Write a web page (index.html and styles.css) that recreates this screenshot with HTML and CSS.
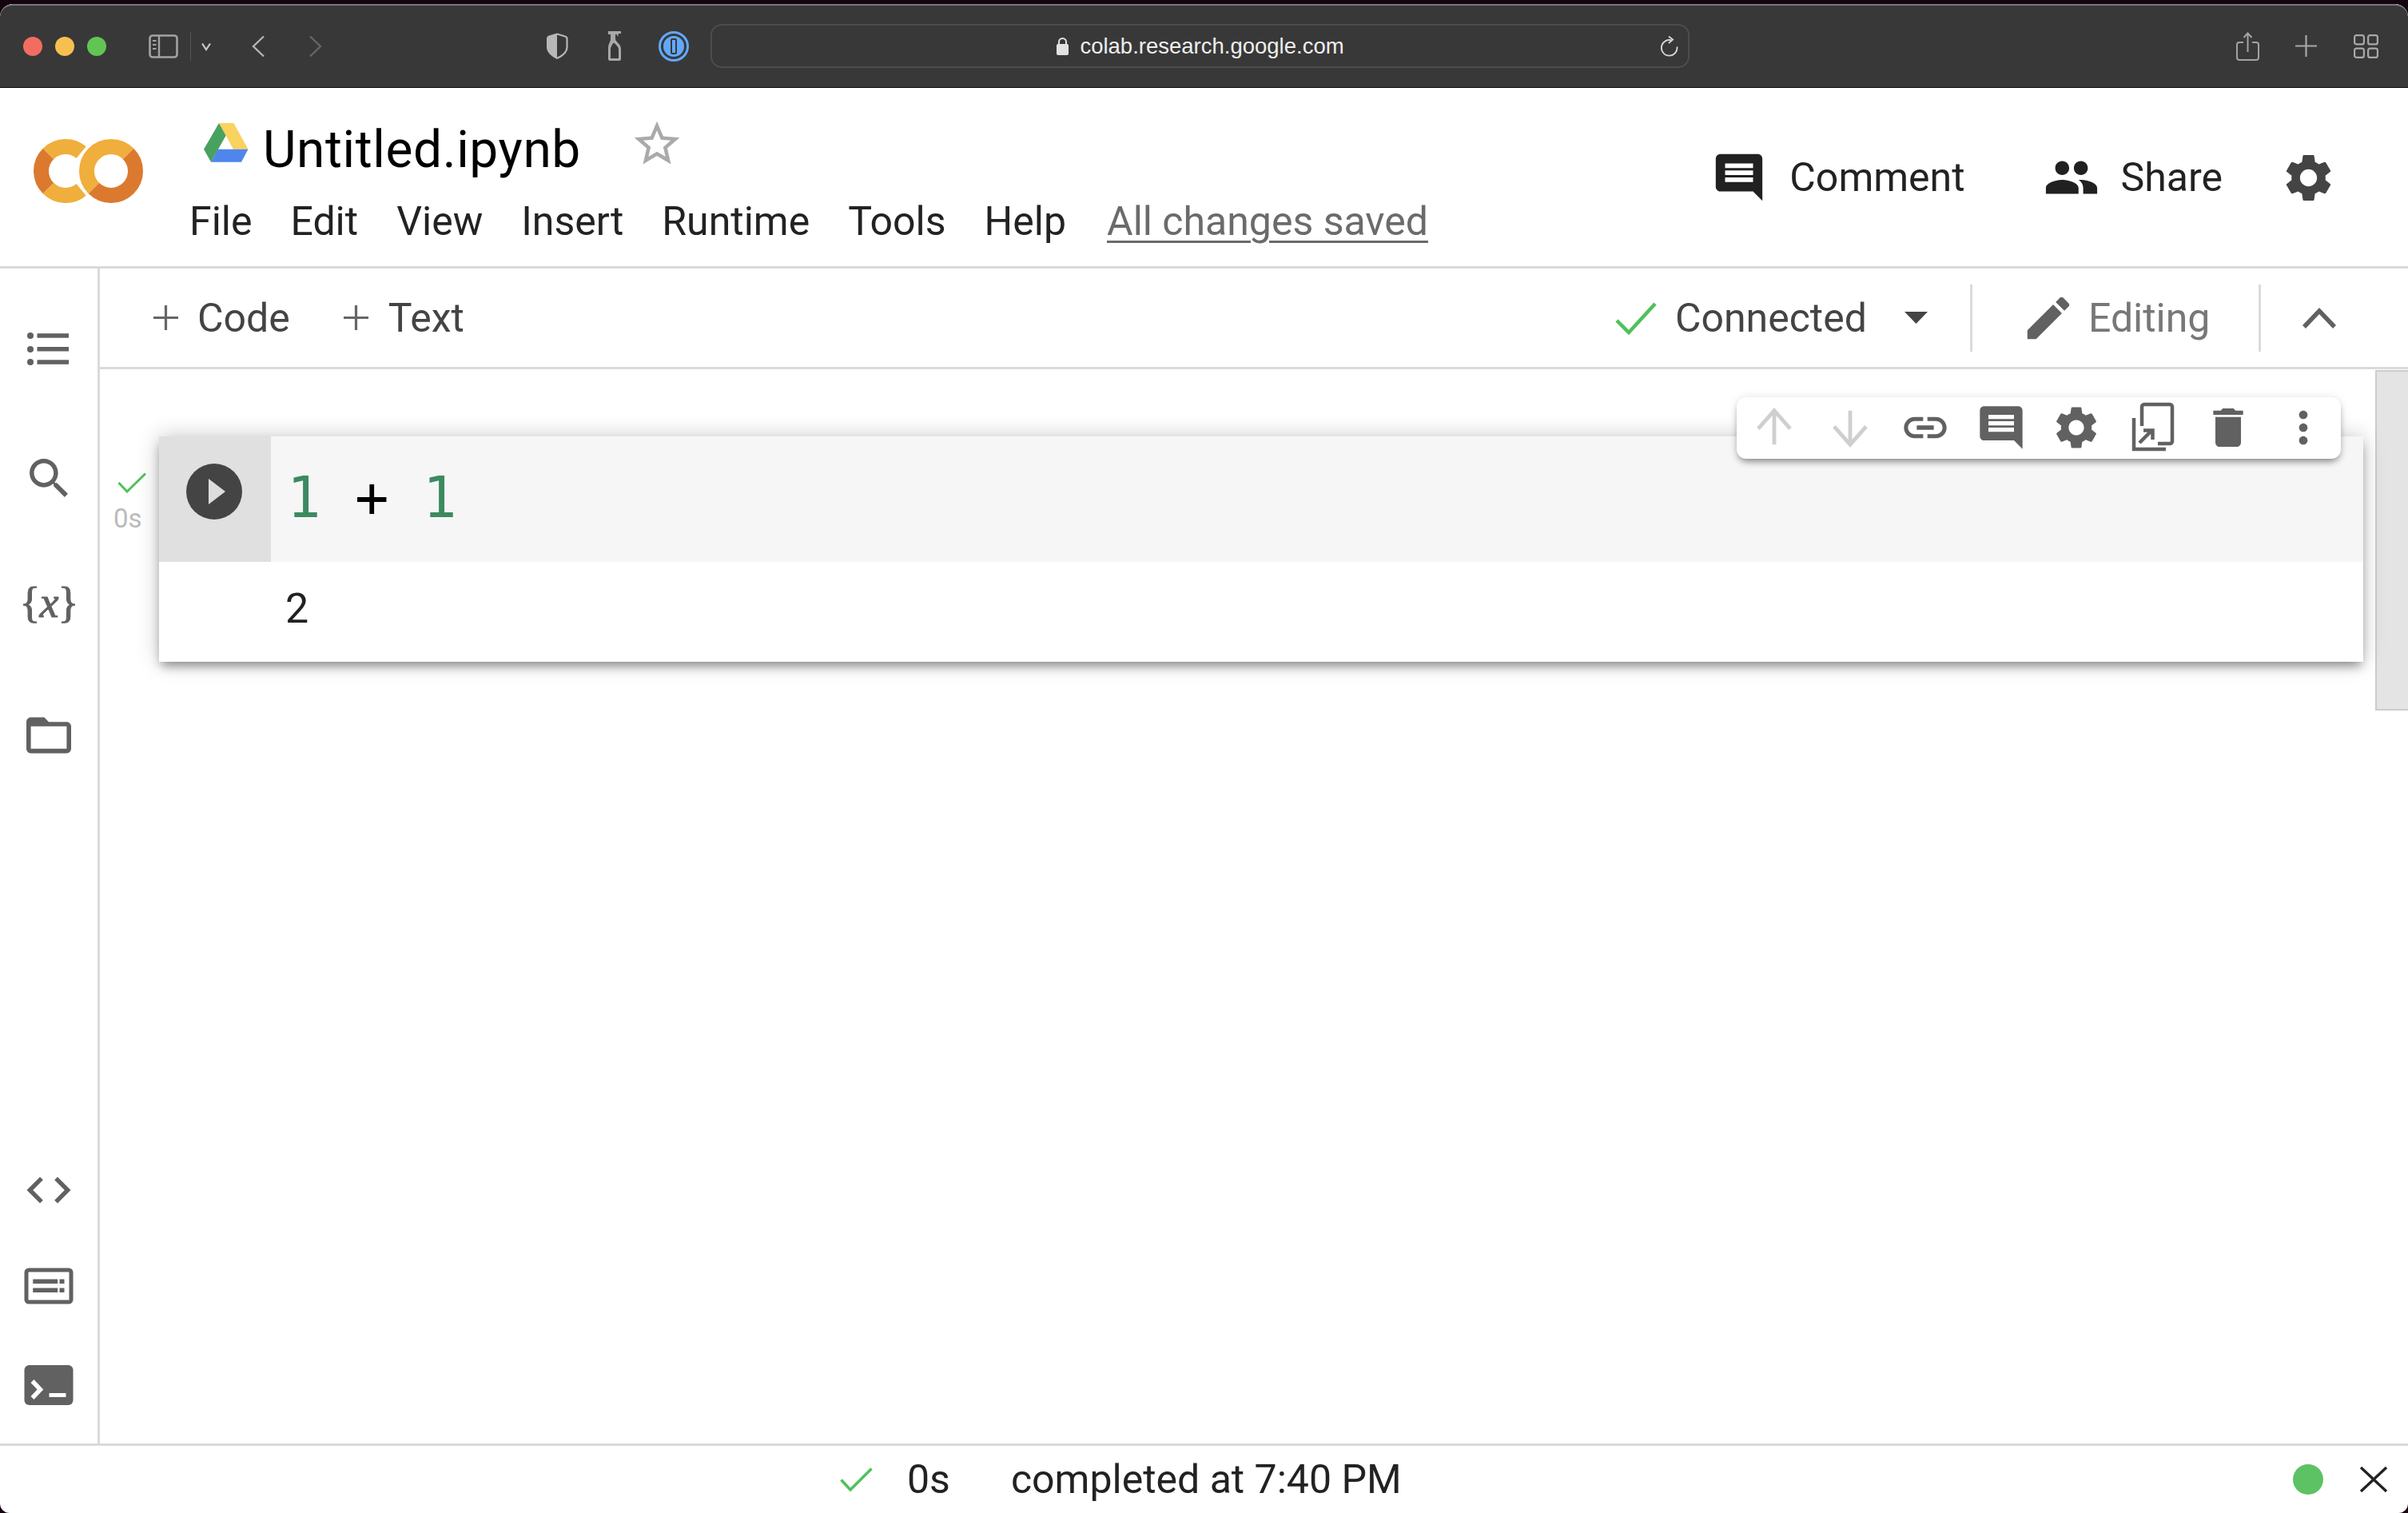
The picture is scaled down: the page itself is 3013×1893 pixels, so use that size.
FILE: index.html
```html
<!DOCTYPE html>
<html lang="en">
<head>
<meta charset="utf-8">
<title>Untitled.ipynb - Colaboratory</title>
<link rel="stylesheet" href="styles.css">
</head>
<body>
<div class="window">
  <div class="chrome">
    <span class="light light-red"></span><span class="light light-yellow"></span><span class="light light-green"></span>
    <svg class="ch-sidebar" viewBox="0 0 37 30"><rect x="1.5" y="1.5" width="34" height="27" rx="3.5" fill="none" stroke="#a3a3a3" stroke-width="2.6"/><path d="M13 2v26" stroke="#a3a3a3" stroke-width="2.4"/><path d="M5 8h4.5M5 13h4.5M5 18h4.5" stroke="#a3a3a3" stroke-width="2"/></svg>
    <span class="ch-divider"></span>
    <svg class="ch-caret" viewBox="0 0 14 14"><path d="M2 3.5L7 11l5-7.5" fill="none" stroke="#c9c9c9" stroke-width="2.2"/></svg>
    <svg class="ch-back" viewBox="0 0 17 28"><path d="M15 1.5L2 14l13 12.5" fill="none" stroke="#b4b4b4" stroke-width="2.4"/></svg>
    <svg class="ch-forward" viewBox="0 0 17 28"><path d="M2 1.5L15 14 2 26.5" fill="none" stroke="#666" stroke-width="2.4"/></svg>
    <svg class="ch-shield" viewBox="0 0 28 33"><path d="M14 1.500L24 4.500c1.500.5 2.500 1.500 2.500 3V18c0 6-5 10.500-12.500 14" fill="none" stroke="#b8b8b8" stroke-width="2.200"/><path d="M14 .5L4 3.500C2 4 1 5.500 1 7v11c0 6.500 5.500 11 13 15z" fill="#b8b8b8"/></svg>
    <svg class="ch-bottle" viewBox="0 0 16 38"><path d="M0 0h16v3h-3l-1 4-1.500-3H9v6c0 3 7 6 7 12v13c0 1-1 2-2 2H2c-1 0-2-1-2-2V21c0-5 3-8 3-11V4H0z" fill="#a8a8a8"/><path d="M6 15h2c1 2 5 4 5 8v11H3V23c0-4 2-5 3-8z" fill="#383838"/></svg>
    <svg class="ch-onepass" viewBox="0 0 38 38"><circle cx="19" cy="19" r="17.500" fill="none" stroke="#62a8ff" stroke-width="3"/><circle cx="19" cy="19" r="13" fill="#62a8ff"/><rect x="15" y="9" width="8" height="20" rx="2" fill="#383838"/><rect x="17" y="11" width="4" height="16" fill="#62a8ff"/></svg>
    <div class="url-bar">
      <span></span>
      <span class="url-center">
        <svg class="url-lock" viewBox="0 0 17 23"><path d="M4 10V6.500a4.500 4.500 0 0 1 9 0V10" fill="none" stroke="#e2e2e2" stroke-width="2"/><rect x="1" y="9" width="15" height="14" rx="2" fill="#e2e2e2"/></svg>
        <span class="url-text">colab.research.google.com</span>
      </span>
      <svg class="url-reload" viewBox="0 0 22 26"><path d="M14 5.600A9.800 9.800 0 1 0 20.400 13.500" fill="none" stroke="#d5d5d5" stroke-width="1.900"/><path d="M10 .5L15 4.600 10 9" fill="none" stroke="#d5d5d5" stroke-width="1.900"/></svg>
    </div>
    <svg class="ch-share" viewBox="0 0 29 36"><path d="M9 13H4a3 3 0 0 0-3 3v16a3 3 0 0 0 3 3h21a3 3 0 0 0 3-3V16a3 3 0 0 0-3-3h-5M14.500 25V2M9.500 7l5-5.500 5 5.500" fill="none" stroke="#a3a3a3" stroke-width="2"/></svg>
    <svg class="ch-plus" viewBox="0 0 27 27"><path d="M13.500 0v27M0 13.500h27" stroke="#a8a8a8" stroke-width="2.200"/></svg>
    <svg class="ch-grid" viewBox="0 0 31 30"><g fill="none" stroke="#a8a8a8" stroke-width="2.200"><rect x="1.100" y="1.100" width="11.800" height="11.300" rx="2.500"/><rect x="18.100" y="1.100" width="11.800" height="11.300" rx="2.500"/><rect x="1.100" y="17.600" width="11.800" height="11.300" rx="2.500"/><rect x="18.100" y="17.600" width="11.800" height="11.300" rx="2.500"/></g></svg>
  </div>

  <header class="header">
    <svg class="logo" viewBox="0 0 138 81">
      <g fill="none" stroke-width="19">
        <path d="M18.430 19.430A30.500 30.500 0 0 1 59.600 17.600" stroke="#f0ae3c"/>
        <path d="M18.430 62.570A30.500 30.500 0 0 0 59.600 64.400" stroke="#f0ae3c"/>
        <path d="M18.430 19.430A30.500 30.500 0 0 0 18.430 62.570" stroke="#db7a2f"/>
        <path d="M118.570 19.430A30.500 30.500 0 0 0 75.430 62.570" stroke="#f0ae3c"/>
        <path d="M118.570 19.430A30.500 30.500 0 0 1 75.430 62.570" stroke="#db7a2f"/>
      </g>
    </svg>
    <div class="title-col">
      <div class="title-row">
        <svg class="drive" viewBox="0 0 56 49"><polygon points="19,0 28,15 9,48.700 0,32.700" fill="#49a160"/><polygon points="19,0 37.500,0 55.500,32.700 37,32.700" fill="#f9d25f"/><polygon points="17.700,32.700 55.500,32.700 47,48.700 9,48.700" fill="#4f86ec"/></svg>
        <span class="title">Untitled.ipynb</span>
        <svg class="star" viewBox="0 0 24 24"><path d="M22 9.240l-7.190-.62L12 2 9.190 8.630 2 9.240l5.460 4.730L5.820 21 12 17.270 18.180 21l-1.630-7.030L22 9.240zM12 15.400l-3.760 2.270 1-4.280-3.320-2.880 4.380-.38L12 6.100l1.710 4.040 4.380.38-3.320 2.880 1 4.280L12 15.400z"/></svg>
      </div>
      <nav class="menu">
        <span>File</span><span>Edit</span><span>View</span><span>Insert</span><span>Runtime</span><span>Tools</span><span>Help</span><span class="saved">All changes saved</span>
      </nav>
    </div>
    <div class="actions">
      <svg class="act-icon" viewBox="0 0 24 24"><path d="M21.990 4c0-1.100-.89-2-1.990-2H4c-1.100 0-2 .9-2 2v12c0 1.100.9 2 2 2h14l4 4-.01-18zM18 14H6v-2h12v2zm0-3H6V9h12v2zm0-3H6V6h12v2z"/></svg>
      <span class="act-label act-comment">Comment</span>
      <svg class="act-icon" viewBox="0 0 24 24"><path d="M16 11c1.660 0 2.990-1.340 2.990-3S17.660 5 16 5c-1.660 0-3 1.340-3 3s1.340 3 3 3zm-8 0c1.660 0 2.990-1.340 2.990-3S9.660 5 8 5C6.340 5 5 6.340 5 8s1.340 3 3 3zm0 2c-2.330 0-7 1.170-7 3.500V19h14v-2.500c0-2.330-4.670-3.500-7-3.500zm8 0c-.29 0-.62.02-.97.05 1.160.84 1.970 1.970 1.970 3.450V19h6v-2.500c0-2.330-4.670-3.500-7-3.500z"/></svg>
      <span class="act-label act-share">Share</span>
      <svg class="act-gear" viewBox="0 0 24 24"><path d="M19.140 12.940c.04-.3.06-.61.06-.94 0-.32-.02-.64-.07-.94l2.030-1.580c.18-.14.23-.41.12-.61l-1.920-3.320c-.12-.22-.37-.29-.59-.22l-2.390.96c-.5-.38-1.030-.7-1.620-.94l-.36-2.540c-.04-.24-.24-.41-.48-.41h-3.840c-.24 0-.43.17-.47.41l-.36 2.540c-.59.24-1.130.57-1.620.94l-2.390-.96c-.22-.08-.47 0-.59.22L2.740 8.870c-.12.21-.08.47.12.61l2.030 1.580c-.05.3-.09.63-.09.94s.02.64.07.94l-2.030 1.580c-.18.14-.23.41-.12.61l1.920 3.320c.12.22.37.29.59.22l2.390-.96c.5.38 1.030.7 1.620.94l.36 2.540c.05.24.24.41.48.41h3.840c.24 0 .44-.17.47-.41l.36-2.540c.59-.24 1.130-.56 1.620-.94l2.390.96c.22.08.47 0 .59-.22l1.920-3.320c.12-.22.07-.47-.12-.61l-2.010-1.580zM12 15.600c-1.980 0-3.600-1.620-3.600-3.600s1.620-3.600 3.600-3.600 3.600 1.620 3.600 3.600-1.620 3.600-3.600 3.600z"/></svg>
    </div>
  </header>

  <div class="main">
    <aside class="sidebar">
      <div class="sb-top">
        <svg class="sb-icon" viewBox="0 0 64 64"><circle cx="9" cy="15" r="4"/><circle cx="9" cy="32" r="4"/><circle cx="9" cy="48" r="4"/><rect x="17.500" y="12.200" width="39.500" height="5.500"/><rect x="17.500" y="29" width="39.500" height="5.500"/><rect x="17.500" y="45.300" width="39.500" height="5.500"/></svg>
        <svg class="sb-icon" viewBox="0.070 0.070 23.360 23.360"><path d="M15.500 14h-.79l-.28-.27C15.410 12.590 16 11.110 16 9.500 16 5.910 13.090 3 9.500 3S3 5.910 3 9.500 5.910 16 9.500 16c1.610 0 3.090-.59 4.230-1.570l.27.28v.79l5 4.990L20.490 19l-4.990-5zm-6 0C7.010 14 5 11.990 5 9.500S7.010 5 9.500 5 14 7.010 14 9.500 11.990 14 9.500 14z"/></svg>
        <div class="sb-vars">{<i>x</i>}</div>
        <svg class="sb-icon" viewBox="0.570 0.570 22.860 22.860"><path d="M20 6h-8l-2-2H4c-1.100 0-1.990.9-1.990 2L2 18c0 1.100.9 2 2 2h16c1.100 0 2-.9 2-2V8c0-1.100-.9-2-2-2zm0 12H4V8h16v10z"/></svg>
      </div>
      <div class="sb-bottom">
        <svg class="sb-icon" viewBox="0.360 0.360 23.270 23.270"><path d="M9.400 16.600L4.800 12l4.600-4.600L8 6l-6 6 6 6 1.400-1.400zm5.200 0l4.600-4.600-4.600-4.600L16 6l6 6-6 6-1.400-1.400z"/></svg>
        <svg class="sb-icon" viewBox="-1.500 -9.500 64 64"><rect x="2.500" y="2.500" width="56" height="40" rx="3" fill="none" stroke="#616161" stroke-width="5"/><rect x="10.700" y="14" width="31" height="5.500"/><rect x="10.700" y="25" width="31" height="5.500"/><rect x="44" y="14" width="6" height="5.500"/><rect x="44" y="25" width="6" height="5.500"/></svg>
        <svg class="sb-icon sb-term" viewBox="-1.500 -7 64 64"><rect width="61" height="50" rx="6"/><path d="M10 20l10 10.500L10 41" fill="none" stroke="#fff" stroke-width="5.500"/><rect x="31" y="35" width="21" height="5" fill="#fff"/></svg>
      </div>
    </aside>

    <div class="content">
      <div class="toolbar">
        <svg class="tb-plus" viewBox="0 0 31 31"><path d="M15.500 0v31M0 15.500h31" stroke="#666" stroke-width="3.200"/></svg>
        <span class="tb-label tb-code">Code</span>
        <svg class="tb-plus" viewBox="0 0 31 31"><path d="M15.500 0v31M0 15.500h31" stroke="#666" stroke-width="3.200"/></svg>
        <span class="tb-label tb-text">Text</span>
        <svg class="tb-check" viewBox="0 0 52 42"><path d="M2 24l15 15L50 3" fill="none" stroke="#4fc15b" stroke-width="4.500"/></svg>
        <span class="tb-label tb-connected">Connected</span>
        <svg class="tb-caret" viewBox="0 0 29 15"><polygon points="0,0 29,0 14.500,15" fill="#444"/></svg>
        <span class="tb-divider tb-div1"></span>
        <svg class="tb-pencil" viewBox="0 0 24 24"><path d="M3 17.250V21h3.750L17.810 9.940l-3.750-3.750L3 17.250zM20.710 7.040c.39-.39.39-1.020 0-1.410l-2.340-2.340c-.39-.39-1.020-.39-1.410 0l-1.830 1.830 3.750 3.750 1.830-1.830z"/></svg>
        <span class="tb-label tb-editing">Editing</span>
        <span class="tb-divider tb-div2"></span>
        <svg class="tb-chevron" viewBox="0 0 42 26"><path d="M0 22L21 0l21 22-4 4L21 8 4 26z" fill="#616161"/></svg>
      </div>

      <div class="notebook">
        <div class="exec">
          <svg class="exec-check" viewBox="0 0 36 26"><path d="M1.500 13L12 24 35 1.500" fill="none" stroke="#4fc15b" stroke-width="3"/></svg>
          <span class="exec-time">0s</span>
        </div>
        <div class="cell">
          <div class="cell-toolbar">
            <svg class="ct-icon ct-off" viewBox="0 0 24 24"><path d="M12 4v16M4.500 12.500L12 4l7.500 8.500" fill="none" stroke="#cfcfcf" stroke-width="1.800"/></svg>
            <svg class="ct-icon ct-off" viewBox="0 0 24 24"><path d="M12 20V4M4.500 11.500L12 20l7.500-8.500" fill="none" stroke="#cfcfcf" stroke-width="1.800"/></svg>
            <svg class="ct-icon" viewBox="0 0 24 24"><path d="M3.900 12c0-1.710 1.390-3.100 3.100-3.100h4V7H7c-2.760 0-5 2.240-5 5s2.240 5 5 5h4v-1.900H7c-1.710 0-3.100-1.390-3.100-3.100zM8 13h8v-2H8v2zm9-6h-4v1.900h4c1.710 0 3.100 1.390 3.100 3.100s-1.390 3.100-3.100 3.100h-4V17h4c2.760 0 5-2.240 5-5s-2.240-5-5-5z"/></svg>
            <svg class="ct-icon" viewBox="0 0 24 24"><path d="M21.990 4c0-1.100-.89-2-1.990-2H4c-1.100 0-2 .9-2 2v12c0 1.100.9 2 2 2h14l4 4-.01-18zM18 14H6v-2h12v2zm0-3H6V9h12v2zm0-3H6V6h12v2z"/></svg>
            <svg class="ct-icon" viewBox="0 0 24 24"><path d="M19.140 12.940c.04-.3.06-.61.06-.94 0-.32-.02-.64-.07-.94l2.030-1.580c.18-.14.23-.41.12-.61l-1.920-3.320c-.12-.22-.37-.29-.59-.22l-2.390.96c-.5-.38-1.030-.7-1.620-.94l-.36-2.540c-.04-.24-.24-.41-.48-.41h-3.840c-.24 0-.43.17-.47.41l-.36 2.540c-.59.24-1.130.57-1.620.94l-2.390-.96c-.22-.08-.47 0-.59.22L2.740 8.870c-.12.21-.08.47.12.61l2.030 1.580c-.05.3-.09.63-.09.94s.02.64.07.94l-2.030 1.580c-.18.14-.23.41-.12.61l1.920 3.320c.12.22.37.29.59.22l2.390-.96c.5.38 1.030.7 1.620.94l.36 2.540c.05.24.24.41.48.41h3.840c.24 0 .44-.17.47-.41l.36-2.540c.59-.24 1.130-.56 1.620-.94l2.390.96c.22.08.47 0 .59-.22l1.920-3.320c.12-.22.07-.47-.12-.61l-2.010-1.580zM12 15.600c-1.980 0-3.600-1.620-3.600-3.600s1.620-3.600 3.600-3.600 3.600 1.620 3.600 3.600-1.620 3.600-3.600 3.600z"/></svg>
            <svg class="ct-icon" viewBox="0 0 64 64"><g fill="none" stroke="#616161" stroke-width="4.500"><path d="M19 30V6a3 3 0 0 1 3-3h32a3 3 0 0 1 3 3v43a3 3 0 0 1-3 3H39"/><path d="M9 20v39h40"/><path d="M16 51l15-15M21 35.500h11.500V47"/></g></svg>
            <svg class="ct-icon" viewBox="0 0 24 24"><path d="M6 19c0 1.100.9 2 2 2h8c1.100 0 2-.9 2-2V7H6v12zM19 4h-3.500l-1-1h-5l-1 1H5v2h14V4z"/></svg>
            <svg class="ct-icon" viewBox="0 0 24 24"><path d="M12 8c1.100 0 2-.9 2-2s-.9-2-2-2-2 .9-2 2 .9 2 2 2zm0 2c-1.100 0-2 .9-2 2s.9 2 2 2 2-.9 2-2-.9-2-2-2zm0 6c-1.100 0-2 .9-2 2s.9 2 2 2 2-.9 2-2-.9-2-2-2z"/></svg>
          </div>
          <div class="cell-input">
            <div class="gutter">
              <div class="run-btn"><svg class="run-tri" viewBox="0 0 21 32"><polygon points="0,0 21,16 0,32" fill="#ddd"/></svg></div>
            </div>
            <div class="code"><span class="num">1</span> + <span class="num">1</span></div>
          </div>
          <div class="cell-output">2</div>
        </div>
        <div class="scrollbar"></div>
      </div>
    </div>
  </div>

  <footer class="status">
    <svg class="st-check" viewBox="0 0 41 30"><path d="M1.500 15.500L13 28 39.500 1.500" fill="none" stroke="#4fc15b" stroke-width="3.500"/></svg>
    <span class="st-time">0s</span>
    <span class="st-text">completed at 7:40 PM</span>
    <span class="st-dot"></span>
    <svg class="st-close" viewBox="0 0 36 32"><path d="M2 1l32 30M34 1L2 31" stroke="#222" stroke-width="3.400"/></svg>
  </footer>
</div>
</body>
</html>
```

FILE: styles.css
```css
* { box-sizing: border-box; }
html, body { margin: 0; height: 100%; }
body {
  background: #14040f;
  padding-top: 5px;
  overflow: hidden;
  font-family: Roboto, "Liberation Sans", sans-serif;
  color: #222;
}
svg { display: block; flex: none; }

.window {
  width: 3013px;
  height: 1888px;
  display: flex;
  flex-direction: column;
  background: #fff;
  border-radius: 16px 16px 12px 12px;
  overflow: hidden;
}

/* browser chrome */
.chrome {
  height: 105px;
  flex: none;
  display: flex;
  align-items: center;
  padding-left: 29px;
  padding-bottom: 1px;
  background: #383838;
  border-top: 2px solid #777;
  border-bottom: 1px solid #0a0a0a;
  border-radius: 16px 16px 0 0;
}
.light { width: 24px; height: 24px; border-radius: 50%; margin-right: 16px; flex: none; }
.light-red { background: #f26d60; }
.light-yellow { background: #f6bf4f; }
.light-green { background: #61c554; margin-right: 0; }
.ch-sidebar { width: 37px; height: 30px; margin-left: 53px; }
.ch-divider { width: 1px; height: 36px; background: #555; margin-left: 15px; }
.ch-caret { width: 14px; height: 14px; margin-left: 12px; }
.ch-back { width: 17px; height: 28px; margin-left: 50px; }
.ch-forward { width: 17px; height: 28px; margin-left: 54px; }
.ch-shield { width: 28px; height: 33px; margin-left: 280px; }
.ch-bottle { width: 16px; height: 38px; margin-left: 50px; }
.ch-onepass { width: 38px; height: 38px; margin-left: 47px; }
.url-bar {
  width: 1225px;
  height: 55px;
  margin-left: 27px;
  border: 2px solid #4d4d4d;
  border-radius: 14px;
  display: grid;
  grid-template-columns: 1fr auto 1fr;
  align-items: center;
}
.url-center { display: flex; align-items: center; gap: 13px; }
.url-lock { width: 17px; height: 23px; }
.url-text { font: 500 27.5px/34px "Liberation Sans", sans-serif; color: #eee; margin-top: 1px; }
.url-reload { width: 22px; height: 26px; justify-self: end; margin-right: 12px; }
.ch-share { width: 29px; height: 36px; margin-left: 684px; }
.ch-plus { width: 27px; height: 27px; margin-left: 45px; }
.ch-grid { width: 31px; height: 30px; margin-left: 46px; }

/* notebook header */
.header {
  height: 226px;
  flex: none;
  display: flex;
  border-bottom: 3px solid #dadada;
  padding-left: 42px;
}
.logo { width: 138px; height: 81px; margin-top: 63px; }
.title-col { margin-left: 57px; display: flex; flex-direction: column; }
.title-row { display: flex; padding-left: 18px; height: 118px; }
.drive { width: 56px; height: 49px; margin-top: 44px; }
.title { font-size: 64px; line-height: 76px; margin-left: 18px; margin-top: 40px; color: #000; letter-spacing: .6px; }
.star { width: 68px; height: 68px; margin-left: 61px; margin-top: 36px; fill: #aaa; }
.menu { display: flex; gap: 48px; font-size: 50px; line-height: 60px; margin-top: 19px; color: #222; }
.saved { color: #6b6b6b; text-decoration: underline; text-decoration-thickness: 3px; text-underline-offset: 7px; margin-left: 3px; }
.actions { margin-left: auto; display: flex; align-items: center; padding-right: 89px; height: 224px; }
.act-icon { width: 70px; height: 70px; fill: #212121; }
.act-label { font-size: 50px; color: #222; }
.act-comment { margin-left: 28px; margin-right: 98px; }
.act-share { margin-left: 27px; }
.act-gear { width: 71px; height: 71px; margin-left: 72px; fill: #444; }

/* main area */
.main { flex: 1; display: flex; min-height: 0; }
.sidebar {
  width: 125px;
  flex: none;
  border-right: 3px solid #dadada;
  display: flex;
  flex-direction: column;
  justify-content: space-between;
  align-items: center;
  padding: 69px 0 41px;
}
.sb-top { display: flex; flex-direction: column; gap: 97px; align-items: center; }
.sb-bottom { display: flex; flex-direction: column; gap: 56px; align-items: center; }
.sb-icon { width: 64px; height: 64px; fill: #616161; }
.sb-term { margin-top: 4px; }
.sb-vars {
  height: 64px;
  width: 64px;
  margin-left: -9px;
  text-align: center;
  font: 54px/54px "Liberation Serif", serif;
  letter-spacing: -1px;
  color: #616161;
  -webkit-text-stroke: 1px #616161;
  white-space: nowrap;
}

.content { flex: 1; display: flex; flex-direction: column; min-width: 0; }
.toolbar {
  height: 126px;
  flex: none;
  display: flex;
  align-items: center;
  padding-left: 67px;
  border-bottom: 3px solid #dadada;
}
.tb-plus { width: 31px; height: 31px; }
.tb-label { font-size: 50px; color: #444; }
.tb-code { margin-left: 24px; margin-right: 67px; }
.tb-text { margin-left: 25px; }
.tb-check { width: 52px; height: 42px; margin-left: 1440px; }
.tb-connected { margin-left: 23px; }
.tb-caret { width: 29px; height: 15px; margin-left: 47px; }
.tb-divider { width: 3px; height: 84px; background: #dadada; }
.tb-div1 { margin-left: 53px; }
.tb-pencil { width: 70px; height: 70px; margin-left: 60px; fill: #616161; }
.tb-editing { margin-left: 15px; color: #777; }
.tb-div2 { margin-left: 61px; }
.tb-chevron { width: 42px; height: 26px; margin-left: 52px; }

.notebook { flex: 1; display: flex; min-height: 0; }
.exec { width: 74px; flex: none; padding: 129px 0 0 17px; }
.exec-check { width: 36px; height: 26px; margin-left: 5px; }
.exec-time { display: block; font-size: 33px; line-height: 40px; color: #bbb; margin-top: 12px; }
.cell {
  position: relative;
  flex: 1;
  align-self: flex-start;
  margin-top: 84px;
  margin-right: 15px;
  background: #fff;
  box-shadow: 0 8px 12px -3px rgba(0, 0, 0, .38), 0 0 26px rgba(0, 0, 0, .22);
}
.cell-toolbar {
  position: absolute;
  top: -49px;
  right: 28px;
  width: 756px;
  height: 77px;
  background: #fff;
  border-radius: 12px;
  box-shadow: 0 6px 10px -3px rgba(0, 0, 0, .45), 0 0 12px rgba(0, 0, 0, .1);
  display: flex;
  align-items: center;
  gap: 30.6px;
  padding: 0 0 2px 15px;
  z-index: 1;
}
.ct-icon { width: 64px; height: 64px; fill: #616161; }
.cell-input { height: 157px; display: flex; background: #f6f6f6; }
.gutter { width: 140px; flex: none; background: #e0e0e0; padding: 34px 0 0 34px; }
.run-btn {
  width: 70px;
  height: 70px;
  border-radius: 50%;
  background: #444;
  display: flex;
  align-items: center;
  justify-content: center;
  padding-left: 6px;
}
.run-tri { width: 21px; height: 32px; }
.code {
  font: 70.6px/100px "DejaVu Sans Mono", monospace;
  color: #000;
  margin-left: 20px;
  margin-top: 27px;
  white-space: pre;
}
.num { color: #3c8a60; }
.cell-output { height: 125px; padding-left: 158px; font-size: 52px; line-height: 60px; padding-top: 29px; color: #212121; }
.scrollbar {
  width: 41px;
  height: 426px;
  flex: none;
  margin-top: 1px;
  background: #e4e4e4;
  border-left: 2px solid #ccc;
  border-top: 2px solid #ccc;
  border-bottom: 2px solid #ccc;
}

/* status bar */
.status {
  height: 87px;
  flex: none;
  display: flex;
  align-items: center;
  padding-left: 1051px;
  border-top: 3px solid #dadada;
}
.st-check { width: 41px; height: 30px; }
.st-time { font-size: 50px; margin-left: 43px; }
.st-text { font-size: 50px; margin-left: 76px; }
.st-dot { width: 38px; height: 38px; border-radius: 50%; background: #5dc264; margin-left: auto; }
.st-close { width: 36px; height: 32px; margin-left: 45px; margin-right: 25px; }
```
